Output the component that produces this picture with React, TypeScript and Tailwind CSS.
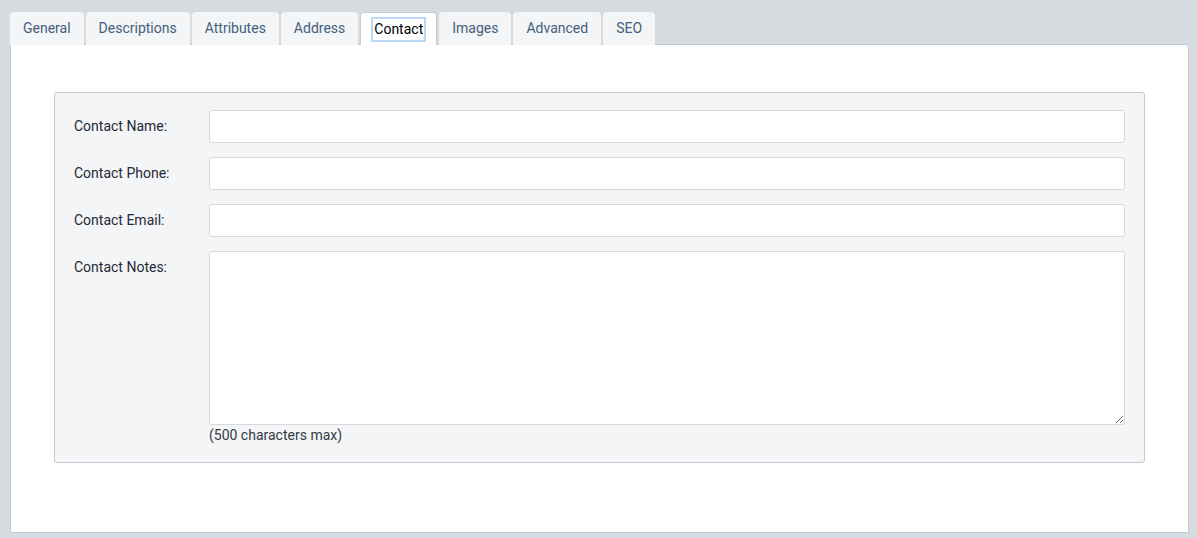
import { useState } from "react";

const tabs = ["General", "Descriptions", "Attributes", "Address", "Contact", "Images", "Advanced", "SEO"];

const fields = ["Contact Name:", "Contact Phone:", "Contact Email:"];

export default function App() {
  const [active, setActive] = useState("Contact");

  return (
    <div
      className="min-h-[538px] bg-[#d6dbe0] pl-[10px] pr-[8px] pt-[12px] pb-[6px] text-[14px]"
      style={{ fontFamily: 'Roboto, "Liberation Sans", sans-serif' }}
    >
      {/* Tabs */}
      <div className="flex gap-[2px] h-[32px]">
        {tabs.map((t) => {
          const on = t === active;
          return (
            <button
              key={t}
              onClick={() => setActive(t)}
              className={`h-[33px] rounded-t-[4px] flex items-center relative z-10 ${
                on
                  ? "px-[12px] bg-white border border-b-0 border-[#c8cdd3] text-black"
                  : "px-[13px] bg-[#f3f5f7] text-[#44607d]"
              }`}
            >
              <span className={on ? "outline-2 outline-[#bcd6f5] px-[1px]" : ""}>{t}</span>
            </button>
          );
        })}
      </div>

      {/* Panel */}
      <div className="bg-white border border-[#c3c9d0] rounded-tr-[4px] h-[489px] px-[43px] pt-[47px]">
        <div className="bg-[#f4f5f7] border border-[#c3c9d0] rounded-[3px] pl-[19px] pr-[19px] pt-[17px] pb-[17px]">
          <div className="flex flex-col gap-[14px]">
            {fields.map((f) => (
              <div key={f} className="flex items-center">
                <label className="w-[135px] shrink-0 text-[#1f2937]">{f}</label>
                <input
                  type="text"
                  className="flex-1 h-[33px] bg-white border border-[#d5d9de] rounded-[3px] px-2 outline-none"
                />
              </div>
            ))}
            <div className="flex">
              <label className="w-[135px] shrink-0 text-[#1f2937] pt-[6px]">Contact Notes:</label>
              <div className="flex-1">
                <textarea className="block w-full h-[174px] bg-white border border-[#d5d9de] rounded-[3px] px-2 outline-none" />
                <p className="text-[#333a44] text-[14px] leading-[20px]">(500 characters max)</p>
              </div>
            </div>
          </div>
        </div>
      </div>
    </div>
  );
}
